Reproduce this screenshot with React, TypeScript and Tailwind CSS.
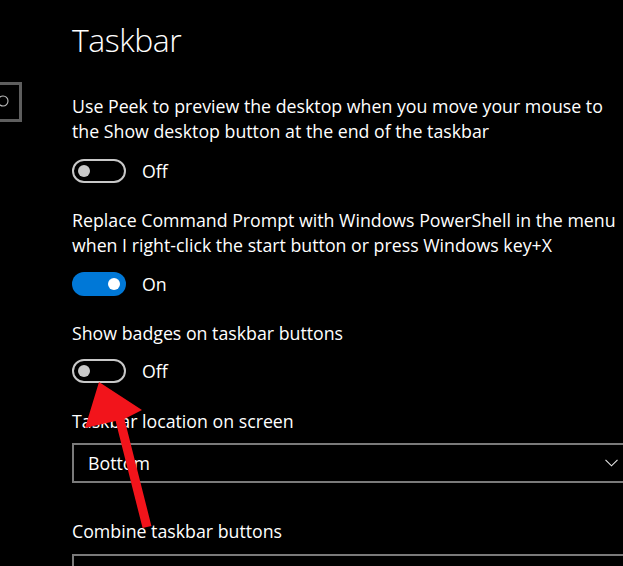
import React from 'react';

const Toggle = ({ on }: { on: boolean }) => (
  <div className="flex items-center gap-[16px]">
    {on ? (
      <div className="w-[54px] h-[24px] rounded-full bg-[#0078d7] flex items-center justify-end pr-[6px]">
        <div className="w-[12px] h-[12px] rounded-full bg-white" />
      </div>
    ) : (
      <div className="w-[54px] h-[24px] rounded-full border-2 border-[#c8c8c8] flex items-center pl-[4px]">
        <div className="w-[12px] h-[12px] rounded-full bg-[#c8c8c8]" />
      </div>
    )}
    <span className="text-[17.75px] leading-[24px] text-white">{on ? 'On' : 'Off'}</span>
  </div>
);

const Dropdown = ({ value }: { value: string }) => (
  <div className="w-[560px] h-[40px] border-2 border-[#7a7a7a] flex items-center justify-between pl-[14px] pr-[12px]">
    <span className="text-[17.75px] text-white">{value}</span>
    <svg width="13" height="8" viewBox="0 0 13 8" fill="none">
      <path d="M0.5 0.8 L6.5 6.8 L12.5 0.8" stroke="#e6e6e6" strokeWidth="1.1" />
    </svg>
  </div>
);

const App: React.FC = () => {
  return (
    <div className="w-[623px] h-[566px] bg-black overflow-hidden relative flex font-['Open_Sans','Noto_Sans',sans-serif] text-white">
      {/* sidebar search box, mostly off screen */}
      <div className="w-[22px] shrink-0 pt-[82px]">
        <div className="w-[22px] h-[40px] border-[3px] border-l-0 border-[#5e5e5e] flex items-center">
          <svg width="12" height="14" viewBox="0 0 12 14" className="-ml-[3px]">
            <circle cx="6" cy="6" r="5" fill="none" stroke="#bdbdbd" strokeWidth="1.1" />
          </svg>
        </div>
      </div>

      <main className="pl-[50px] flex-1 min-w-0">
        <h1 className="mt-[20px] text-[32px] leading-[40px] font-light tracking-[-0.5px]">Taskbar</h1>

        <p className="mt-[34px] text-[17.75px] leading-[25px]">
          Use Peek to preview the desktop when you move your mouse to
          <br />
          the Show desktop button at the end of the taskbar
        </p>
        <div className="mt-[15px]">
          <Toggle on={false} />
        </div>

        <p className="mt-[25px] text-[17.75px] leading-[25px]">
          Replace Command Prompt with Windows PowerShell in the menu
          <br />
          when I right-click the start button or press Windows key+X
        </p>
        <div className="mt-[14px]">
          <Toggle on={true} />
        </div>

        <p className="mt-[25px] text-[17.75px] leading-[25px]">Show badges on taskbar buttons</p>
        <div className="mt-[13px]">
          <Toggle on={false} />
        </div>

        <p className="mt-[26px] text-[17.75px] leading-[25px]">Taskbar location on screen</p>
        <div className="mt-[9px]">
          <Dropdown value="Bottom" />
        </div>

        <p className="mt-[36px] text-[17.75px] leading-[25px]">Combine taskbar buttons</p>
        <div className="mt-[10px]">
          <Dropdown value="Always, hide labels" />
        </div>
      </main>

      {/* red annotation arrow */}
      <svg className="absolute left-0 top-0 pointer-events-none" width="623" height="566" viewBox="0 0 623 566">
        <polygon
          points="99,382 142,410 124.4,418.9 151.4,525.9 142.6,528.1 115.6,421.1 85,428"
          fill="#f2141b"
        />
      </svg>
    </div>
  );
};

export default App;
